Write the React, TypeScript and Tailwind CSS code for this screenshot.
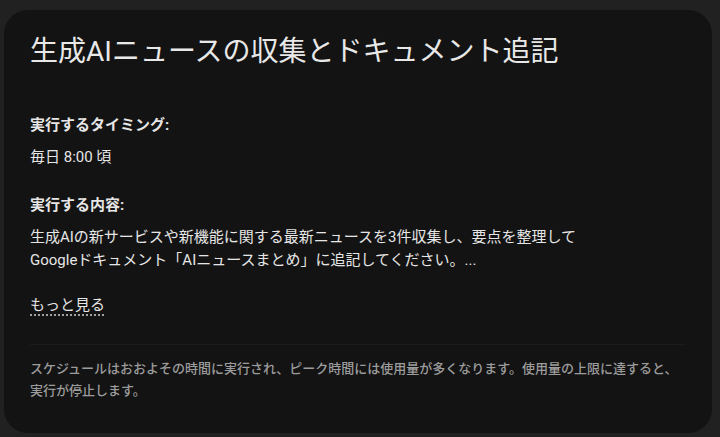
export default function App() {
  const font = { fontFamily: 'Roboto, "Noto Sans CJK JP", sans-serif' };
  return (
    <div className="h-[437px] w-[720px] bg-[#212121] pl-[4px] pr-[8px] pt-[10px]" style={font}>
      <div className="h-[423px] rounded-[24px] bg-[#131313] px-[26px] pt-[24px]">
        <h1 className="text-[28px] leading-[36px] font-normal text-[#e8e8e8]">
          生成AIニュースの収集とドキュメント追記
        </h1>

        <section className="mt-[44px]">
          <h2 className="text-[15px] leading-[22px] font-bold text-[#e6e6e6]">実行するタイミング:</h2>
          <p className="mt-[10px] text-[15px] leading-[22px] text-[#e6e6e6]">毎日 8:00 頃</p>
        </section>

        <section className="mt-[26px]">
          <h2 className="text-[15px] leading-[22px] font-bold text-[#e6e6e6]">実行する内容:</h2>
          <p className="mt-[10px] text-[15px] leading-[23px] text-[#e6e6e6]">
            生成AIの新サービスや新機能に関する最新ニュースを3件収集し、要点を整理して
            <br />
            Googleドキュメント「AIニュースまとめ」に追記してください。...
          </p>
        </section>

        <button
          type="button"
          className="mt-[22px] block text-[15px] leading-[22px] text-[#e6e6e6] underline decoration-dotted decoration-[#cfcfcf] underline-offset-[5px]"
        >
          もっと見る
        </button>

        <div className="mt-[28px] border-t border-[#1b1b1b]" />

        <p className="mt-[13px] text-[13px] leading-[22px] font-medium text-[#9c9c9c]">
          スケジュールはおおよその時間に実行され、ピーク時間には使用量が多くなります。使用量の上限に達すると、
          <br />
          実行が停止します。
        </p>
      </div>
    </div>
  );
}
